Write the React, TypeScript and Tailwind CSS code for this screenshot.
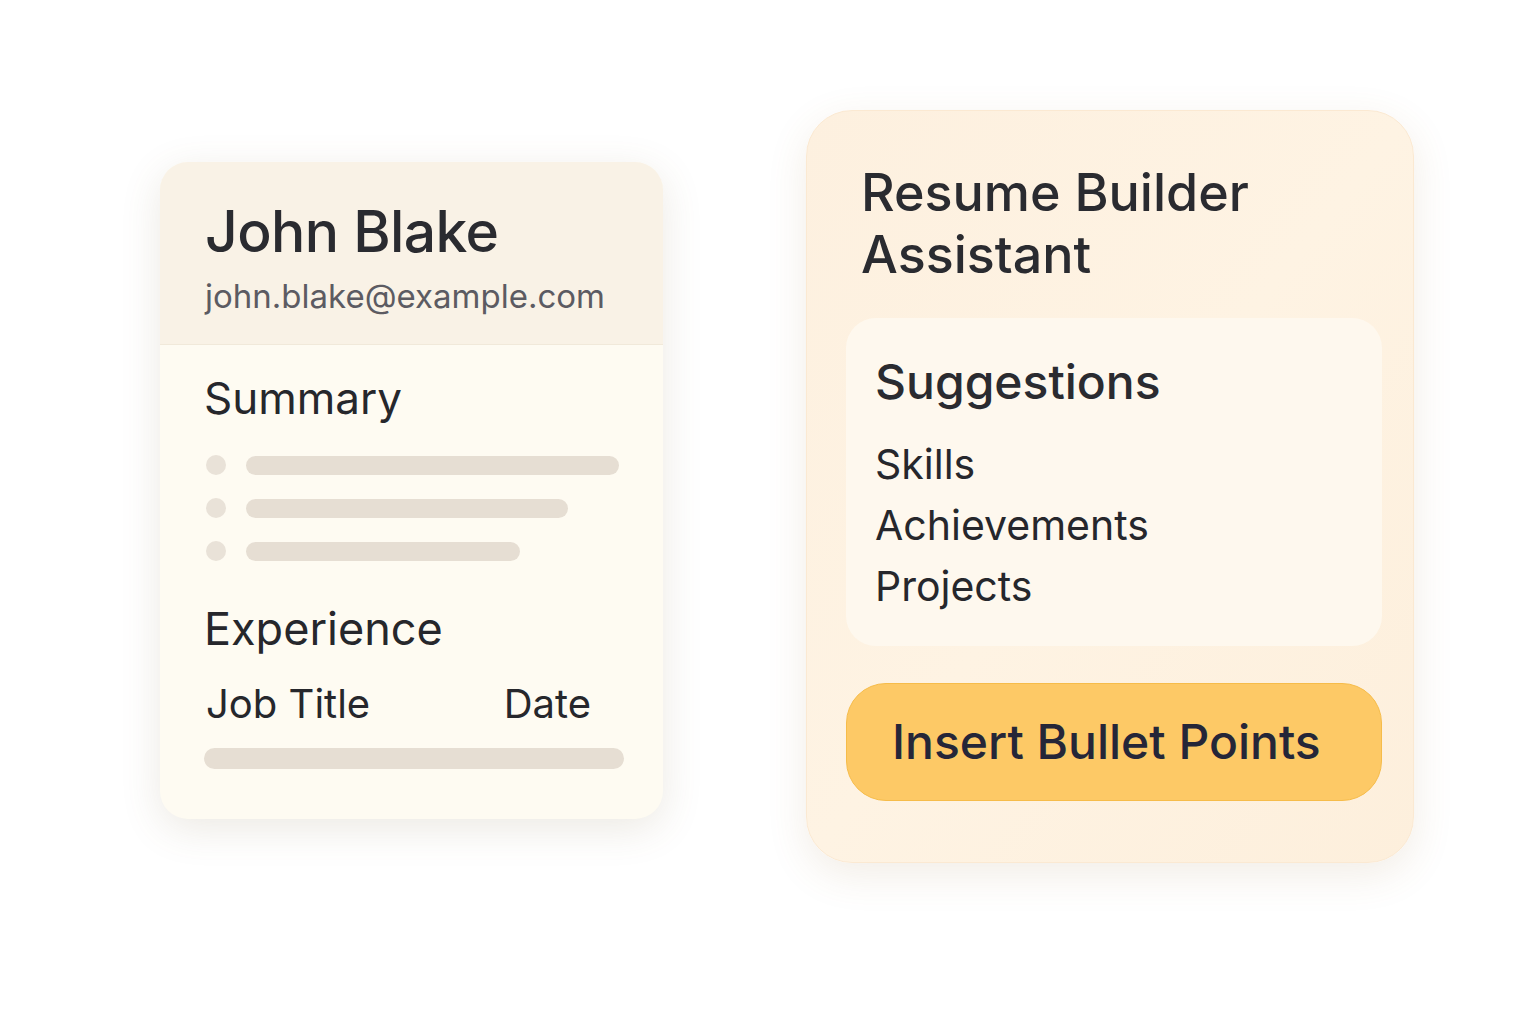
const summaryLines = ["w-[377px]", "w-[322px]", "w-[274px]"];

const suggestions = ["Skills", "Achievements", "Projects"];

function ResumeCard() {
  return (
    <div className="mt-[52px] h-[657px] w-[503px] shrink-0 overflow-hidden rounded-[28px] bg-[#fefbf2] shadow-[0_10px_40px_rgba(120,100,60,0.14)]">
      <div className="h-[183px] border-b border-[#f1e9da] bg-[#f9f2e6] pl-[45px] pt-[41px]">
        <h1 className="text-[57px] font-medium leading-none tracking-[-0.01em] text-[#2a2b30]">
          John Blake
        </h1>
        <p className="mt-[20px] text-[33px] leading-none text-[#5c5b62]">
          john.blake@example.com
        </p>
      </div>
      <div className="px-[44px] pt-[31px]">
        <h2 className="text-[44px] leading-none text-[#26272c]">Summary</h2>
        <div className="mt-[35px] flex flex-col gap-[23px]">
          {summaryLines.map((w) => (
            <div key={w} className="flex items-center gap-[20px] pl-[2px]">
              <span className="h-[20px] w-[20px] rounded-full bg-[#e9e2d8]" />
              <span className={`h-[19px] rounded-full bg-[#e6ded3] ${w}`} />
            </div>
          ))}
        </div>
        <h2 className="mt-[45px] text-[45px] leading-none text-[#26272c]">
          Experience
        </h2>
        <div className="mt-[33px] flex items-center justify-between pl-[2px] pr-[28px] text-[40px] leading-none text-[#26272c]">
          <span>Job Title</span>
          <span>Date</span>
        </div>
        <div className="mt-[24px] h-[21px] w-[420px] rounded-full bg-[#e6ded3]" />
      </div>
    </div>
  );
}

function AssistantCard() {
  return (
    <div className="h-[753px] w-[608px] shrink-0 rounded-[46px] border border-[#fbe9d2] bg-gradient-to-br from-[#fdf0df] via-[#fef3e3] to-[#fdefdc] pl-[39px] pr-[31px] pt-[51px] shadow-[0_12px_40px_rgba(150,110,50,0.12)]">
      <h1 className="pl-[15px] text-[52px] font-medium leading-[62px] text-[#2a2b30]">
        Resume Builder
        <br />
        Assistant
      </h1>
      <div className="mt-[32px] h-[328px] rounded-[30px] bg-[#fef8ee] pl-[29px] pt-[40px]">
        <h2 className="text-[48px] font-medium leading-none text-[#2a2b30]">
          Suggestions
        </h2>
        <ul className="mt-[38px] flex flex-col gap-[21px] text-[41px] leading-[40px] text-[#26272c]">
          {suggestions.map((s) => (
            <li key={s}>{s}</li>
          ))}
        </ul>
      </div>
      <button className="mt-[37px] flex h-[118px] w-full items-center rounded-[40px] border border-[#f6bc4a] bg-[#fdc966] pl-[45px] text-[48px] font-medium leading-none text-[#252638]">
        Insert Bullet Points
      </button>
    </div>
  );
}

export default function App() {
  return (
    <div className="flex min-h-[1024px] items-start gap-[143px] bg-white pl-[160px] pt-[110px] font-['Inter','Noto_Sans',sans-serif]">
      <ResumeCard />
      <AssistantCard />
    </div>
  );
}
